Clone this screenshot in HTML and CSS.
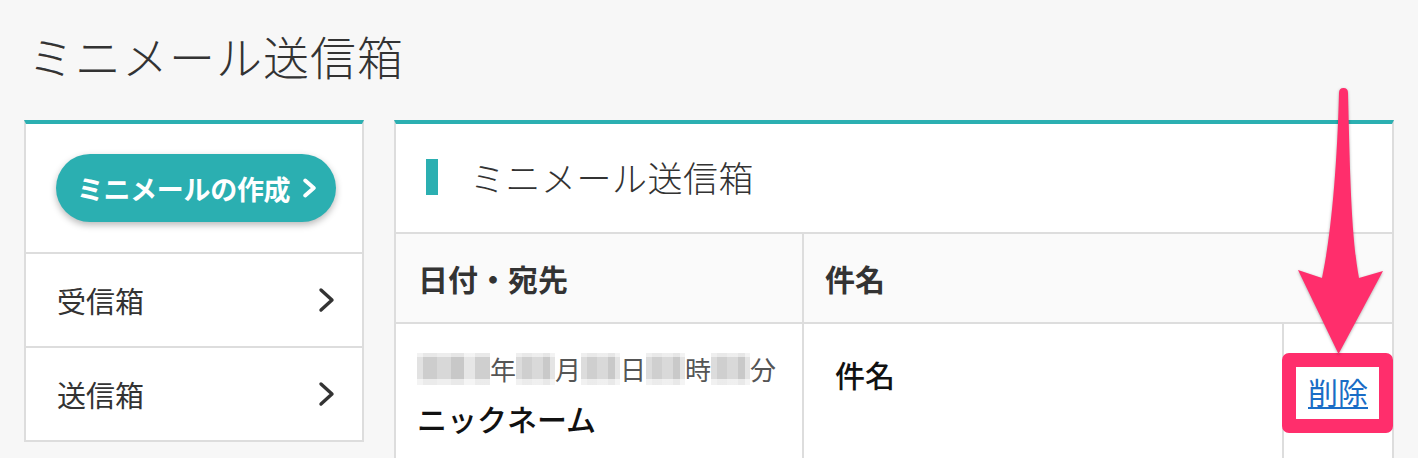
FILE: index.html
```html
<!DOCTYPE html>
<html lang="ja">
<head>
<meta charset="utf-8">
<title>ミニメール送信箱</title>
<link rel="stylesheet" href="styles.css">
</head>
<body>
<h1 class="page-title">ミニメール送信箱</h1>
<div class="layout">
  <aside class="side">
    <div class="side-cta">
      <a class="btn" href="#">ミニメールの作成<svg class="btn-chev" viewBox="0 0 14 18"><polyline points="3,2 11,9 3,16"/></svg></a>
    </div>
    <a class="side-item" href="#"><span>受信箱</span><svg class="chev" viewBox="0 0 18 26"><polyline points="3,3 14,13 3,23"/></svg></a>
    <a class="side-item" href="#"><span>送信箱</span><svg class="chev" viewBox="0 0 18 26"><polyline points="3,3 14,13 3,23"/></svg></a>
  </aside>
  <section class="main">
    <div class="main-head"><span class="bar"></span><h2 class="main-title">ミニメール送信箱</h2></div>
    <div class="grid">
      <div class="th th-date">日付・宛先</div>
      <div class="th th-subject">件名</div>
      <div class="td td-date">
        <div class="date"><span class="blur blur4"></span>年<span class="blur blur2"></span>月<span class="blur blur2"></span>日<span class="blur blur2"></span>時<span class="blur blur2"></span>分</div>
        <div class="nick">ニックネーム</div>
      </div>
      <div class="td td-subject">件名</div>
      <div class="td td-del"><a class="del" href="#">削除</a></div>
    </div>
  </section>
</div>
<svg class="annot" viewBox="0 0 1418 458" width="1418" height="458">
  <rect class="annot-box" x="1289" y="360" width="97" height="66"/>
  <path class="annot-arrow" d="M1339,93 Q1339,88 1343.5,88 Q1348,88 1348,93 C1350,170 1351,235 1359,278 L1383,271 L1338.5,354 L1298,270 L1322,278 C1331,235 1337,170 1339,93 Z"/>
</svg>
</body>
</html>
```

FILE: styles.css
```css
* { box-sizing: border-box; }

body {
  margin: 0;
  background: #f7f7f7;
  font-family: "Noto Sans CJK JP", "Noto Sans", sans-serif;
  color: #333;
  position: relative;
  width: 1418px;
  height: 458px;
  overflow: hidden;
}

.page-title {
  margin: 0;
  padding: 23px 0 0 28px;
  height: 120px;
  font-size: 46px;
  line-height: 64px;
  font-weight: 300;
  color: #333;
  letter-spacing: 1px;
}

.layout {
  display: flex;
  align-items: flex-start;
  gap: 30px;
  padding: 0 24px;
}

.side {
  width: 340px;
  flex: none;
  background: #fff;
  border: 2px solid #ddd;
  border-top: 4px solid #2bafb1;
}

.side-cta {
  padding: 30px 0 30px 30px;
}

.btn {
  display: flex;
  align-items: center;
  justify-content: center;
  width: 280px;
  height: 68px;
  border-radius: 34px;
  background: #2bafb1;
  box-shadow: 0 3px 7px rgba(0, 0, 0, 0.28);
  color: #fff;
  font-size: 27px;
  font-weight: 700;
  text-decoration: none;
  letter-spacing: -0.3px;
  padding-left: 2px;
}

.btn-chev {
  width: 15px;
  height: 20px;
  margin-left: 12px;
  fill: none;
  stroke: #fff;
  stroke-width: 3.6;
  stroke-linecap: round;
  stroke-linejoin: round;
}

.side-item {
  display: flex;
  align-items: center;
  justify-content: space-between;
  height: 94px;
  border-top: 2px solid #ddd;
  padding: 0 26px 0 31px;
  color: #333;
  text-decoration: none;
  font-size: 29px;
  font-weight: 400;
}

.chev {
  width: 18px;
  height: 26px;
  fill: none;
  stroke: #333;
  stroke-width: 3.4;
  stroke-linecap: round;
  stroke-linejoin: round;
}

.main {
  flex: 1;
  background: #fff;
  border: 2px solid #ddd;
  border-top: 4px solid #2bafb1;
}

.main-head {
  display: flex;
  align-items: center;
  height: 110px;
  padding-left: 30px;
  border-bottom: 2px solid #ddd;
}

.bar {
  width: 12px;
  height: 36px;
  background: #2bafb1;
  margin-right: 32px;
  margin-top: -2px;
}

.main-title {
  margin: 0;
  font-size: 35px;
  font-weight: 300;
  color: #333;
  line-height: 1;
  margin-top: -4px;
  letter-spacing: 0.5px;
}

.grid {
  display: grid;
  grid-template-columns: 408px 480px 1fr;
}

.th {
  height: 90px;
  display: flex;
  align-items: center;
  background: #fafafa;
  border-bottom: 2px solid #ddd;
  font-size: 30px;
  font-weight: 700;
  color: #333;
  padding-left: 22px;
}

.th-date { border-right: 2px solid #ddd; }
.th-subject { grid-column: 2 / 4; padding-left: 21px; }

.td {
  min-height: 140px;
}

.td-date {
  border-right: 2px solid #ddd;
  padding: 26px 0 0 21px;
}

.date {
  display: flex;
  align-items: center;
  font-size: 26px;
  line-height: 38px;
  color: #555;
}

.blur {
  display: inline-block;
  height: 32px;
  width: 39px;
  background:
    linear-gradient(180deg, rgba(255,255,255,0.55) 0 12%, rgba(255,255,255,0) 12% 82%, rgba(255,255,255,0.6) 82% 100%),
    linear-gradient(90deg, #dcdcdc 0 16%, #cfcfcf 16% 42%, #d9d9d9 42% 68%, #c9c9c9 68% 88%, #e4e4e4 88% 100%);
  filter: blur(0.6px);
}

.blur4 {
  width: 73px;
  background:
    linear-gradient(180deg, rgba(255,255,255,0.55) 0 12%, rgba(255,255,255,0) 12% 82%, rgba(255,255,255,0.6) 82% 100%),
    linear-gradient(90deg, #e2e2e2 0 8%, #cdcdcd 8% 28%, #d8d8d8 28% 46%, #c8c8c8 46% 64%, #e6e6e6 64% 80%, #cfcfcf 80% 100%);
}

.nick {
  margin-top: 10px;
  font-size: 30px;
  line-height: 40px;
  font-weight: 500;
  color: #111;
}

.td-subject {
  border-right: 2px solid #ddd;
  padding: 29px 0 0 31px;
  font-size: 30px;
  line-height: 42px;
  font-weight: 500;
  color: #111;
}

.td-del {
  text-align: center;
  padding-top: 46px;
  font-size: 30px;
  line-height: 42px;
}

.del {
  color: #1a6dc6;
  text-decoration: underline;
  text-decoration-thickness: 2px;
  text-underline-offset: 3px;
}

.annot {
  position: absolute;
  left: 0;
  top: 0;
  pointer-events: none;
}

.annot-box {
  fill: none;
  stroke: #ff2e6c;
  stroke-width: 14;
  stroke-linejoin: round;
}

.annot-arrow {
  fill: #ff2e6c;
  filter: drop-shadow(0 1px 1.5px rgba(0, 0, 0, 0.3));
}
```
